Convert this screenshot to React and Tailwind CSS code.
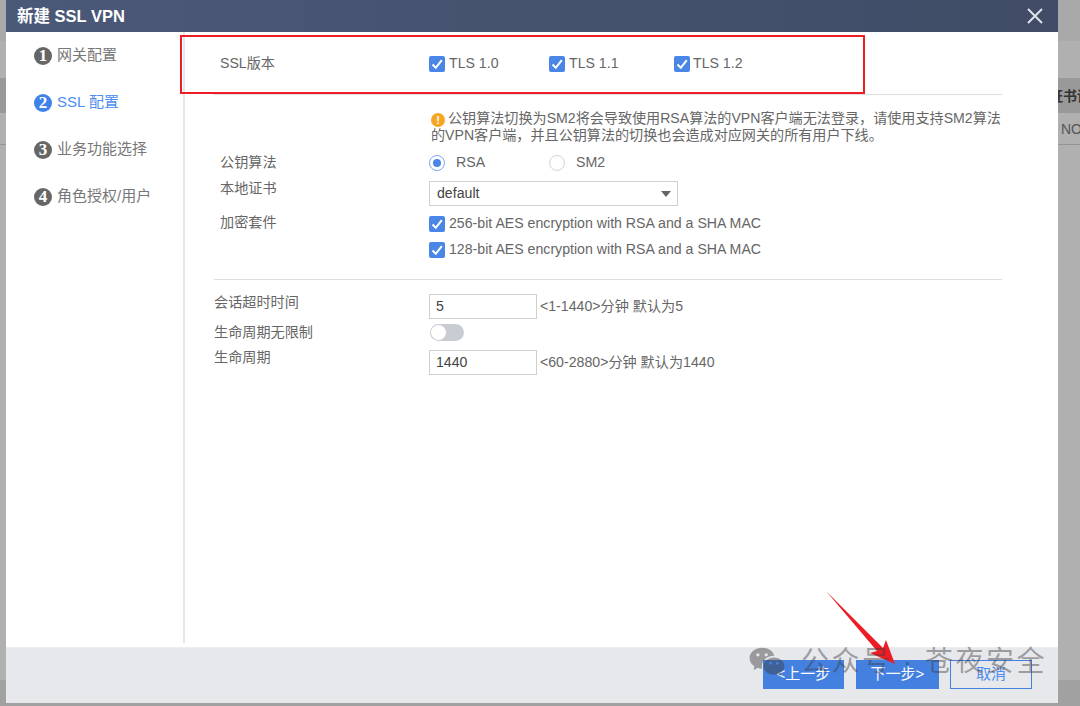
import { RiWechatFill } from "react-icons/ri";

const font = { fontFamily: '"Liberation Sans", "Noto Sans CJK SC", sans-serif' };

const steps = [
    { n: 1, label: "网关配置" },
    { n: 2, label: "SSL 配置", active: true },
    { n: 3, label: "业务功能选择" },
    { n: 4, label: "角色授权/用户" },
];

const Check = ({ className = "" }) => (
    <span className={`flex size-4 shrink-0 items-center justify-center rounded-[2px] bg-[#4a86e6] ${className}`}>
        <svg viewBox="0 0 16 16" className="size-4" fill="none" stroke="#fff" strokeWidth="2">
            <path d="M3.5 8.5 L6.8 11.8 L12.8 4.2" />
        </svg>
    </span>
);

const CheckItem = ({ label, className = "" }) => (
    <label className={`flex items-center gap-1 ${className}`}>
        <Check />
        <span>{label}</span>
    </label>
);

const Radio = ({ label, on, className = "" }) => (
    <label className={`flex items-center ${className}`}>
        <span className={`flex size-4 shrink-0 items-center justify-center rounded-full border ${on ? "border-[#7aa8ee]" : "border-[#d5d5d8]"}`}>
            {on && <span className="size-2 rounded-full bg-[#4a86e6]" />}
        </span>
        <span className="ml-[11px]">{label}</span>
    </label>
);

const TextInput = ({ value }) => (
    <div className="flex h-[25px] w-[108px] shrink-0 items-center border border-[#cfcfcf] bg-white pl-[6px] text-[#444]">
        {value}
    </div>
);

const Sidebar = () => (
    <div className="mb-1 w-[179px] shrink-0 border-r-2 border-[#e8e8e8] pl-[28px]">
        {steps.map((step) => (
            <div key={step.n} className={`flex h-[47px] items-center gap-[5px] text-[15px] ${step.active ? "text-[#4d8cf0]" : "text-[#777]"}`}>
                <span
                    className={`flex size-[18px] items-center justify-center rounded-full text-[17px] font-bold text-white ${step.active ? "bg-[#3f82ea]" : "bg-[#666]"}`}
                    style={{ fontFamily: '"Liberation Serif", serif' }}
                >
                    {step.n}
                </span>
                <span>{step.label}</span>
            </div>
        ))}
    </div>
);

const Form = () => (
    <div className="ml-[29px] w-[788px] text-[14.15px] text-[#666]">
        <div className="flex h-[63px] items-center border-b border-[#dedede] pl-[6px] pt-[2px]">
            <span className="w-[209px]">SSL版本</span>
            <CheckItem label="TLS 1.0" className="w-[120px]" />
            <CheckItem label="TLS 1.1" className="w-[125px]" />
            <CheckItem label="TLS 1.2" className="gap-[3px]" />
        </div>

        <div className="whitespace-nowrap pl-[217px] pt-[15px] text-[14.1px] leading-4">
            <span className="mr-[3px] inline-flex size-[14px] items-center justify-center rounded-full bg-[#f5a623] align-[-1px] text-[11px] font-bold text-white">!</span>
            公钥算法切换为SM2将会导致使用RSA算法的VPN客户端无法登录，请使用支持SM2算法
            <br />
            的VPN客户端，并且公钥算法的切换也会造成对应网关的所有用户下线。
        </div>

        <div className="mt-[10px] flex h-5 items-center pl-[6px]">
            <span className="w-[209px]">公钥算法</span>
            <Radio label="RSA" on className="w-[120px]" />
            <Radio label="SM2" />
        </div>

        <div className="mt-2 flex h-[25px] items-start pl-[6px]">
            <span className="w-[209px] leading-[14px]">本地证书</span>
            <div className="flex h-[25px] w-[249px] items-center justify-between border border-[#cfcfcf] pl-[7px] pr-[6px] text-[#444]">
                default
                <span className="h-0 w-0 border-x-[5px] border-t-[6px] border-x-transparent border-t-[#666]" />
            </div>
        </div>

        <div className="mt-[5px] flex pl-[6px]">
            <span className="w-[209px] pt-[1px]">加密套件</span>
            <div>
                <CheckItem label="256-bit AES encryption with RSA and a SHA MAC" className="h-[26px]" />
                <CheckItem label="128-bit AES encryption with RSA and a SHA MAC" className="h-[26px]" />
            </div>
        </div>

        <div className="mt-4 border-t border-[#dedede]" />

        <div className="mt-[14px] flex h-[25px] items-center">
            <span className="w-[215px] -translate-y-[4px]">会话超时时间</span>
            <TextInput value="5" />
            <span className="ml-[3px]">&lt;1-1440&gt;分钟 默认为5</span>
        </div>

        <div className="mt-[5px] flex h-[17px] items-center">
            <span className="w-[216px]">生命周期无限制</span>
            <span className="flex h-[17px] w-[34px] items-center rounded-full bg-[#c9ccd3] pl-[1px]">
                <span className="size-[15px] rounded-full bg-white" />
            </span>
        </div>

        <div className="mt-[9px] flex h-[25px] items-center">
            <span className="w-[215px] -translate-y-[5px]">生命周期</span>
            <TextInput value="1440" />
            <span className="ml-[3px]">&lt;60-2880&gt;分钟 默认为1440</span>
        </div>
    </div>
);

const Backdrop = () => (
    <div className="flex h-[706px] flex-col overflow-hidden bg-[#b0b0b0] text-sm">
        <div className="h-[41px] bg-[#a9a9a9]" />
        <div className="h-[37px]" />
        <div className="flex h-[35px] items-center whitespace-nowrap bg-[#999] pl-[1049px] font-bold text-[#333]">证书请</div>
        <div className="flex h-[32px] items-center whitespace-nowrap border-b border-[#949494] pl-[1061px] text-[#555]">NONE</div>
        <div className="flex-1" />
        <div className="h-[26px] bg-[#a1a1a1]" />
    </div>
);

const App = () => {
    return (
        <div className="relative h-[706px] w-[1080px] overflow-hidden" style={font}>
            <Backdrop />

            <div className="absolute left-[6px] top-0 flex h-[703px] w-[1052px] flex-col bg-white">
                <div className="flex h-8 shrink-0 items-center justify-between bg-gradient-to-r from-[#4b5978] to-[#404c66] pl-[11px] pr-[15px]">
                    <span className="text-[16.5px] font-bold text-white">新建 SSL VPN</span>
                    <svg viewBox="0 0 16 16" className="size-4" fill="none" stroke="#dfe2e8" strokeWidth="2">
                        <path d="M1 1 L15 15 M15 1 L1 15" />
                    </svg>
                </div>

                <div className="flex min-h-0 flex-1">
                    <Sidebar />
                    <Form />
                </div>

                <div className="flex h-14 shrink-0 items-start justify-end border-t border-[#eeeeee] bg-[#e7e8ec] pr-[26px] pt-3 text-[15px]">
                    <button className="h-[29px] w-[81px] bg-[#4480e0] text-white">&lt;上一步</button>
                    <button className="ml-3 h-[29px] w-[83px] bg-[#4480e0] text-white">下一步&gt;</button>
                    <button className="ml-[11px] h-[29px] w-[82px] border border-[#4480e0] text-[#4d8cf0]">取消</button>
                </div>
            </div>

            {/* annotation + watermark pasted over the screenshot */}
            <div className="absolute left-[180px] top-[35px] h-[59px] w-[685px] border-2 border-[#ee1c25]" />

            <svg className="absolute left-0 top-0" width="1080" height="706" fill="#ee1c25">
                <polygon points="826,591 883,648 886,640 895,664 870,653 877,651" />
            </svg>

            <div className="absolute left-[748px] top-[640px] flex items-center text-[rgba(60,60,60,0.45)]">
                <RiWechatFill size={38} />
                <span className="ml-[15px] whitespace-nowrap text-[28px] leading-[44px] tracking-[2.5px]">公众号 · 苍夜安全</span>
            </div>
        </div>
    );
};

export default App;
